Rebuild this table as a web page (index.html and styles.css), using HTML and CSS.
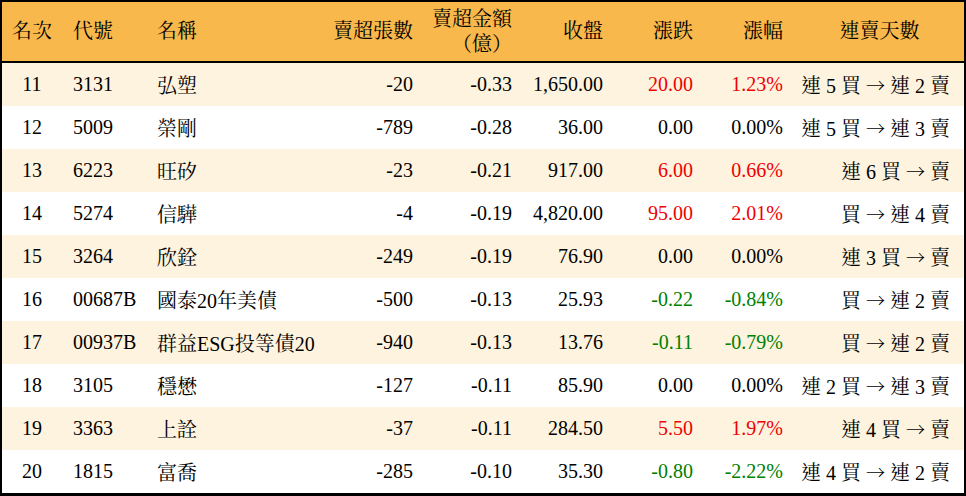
FILE: index.html
```html
<!DOCTYPE html>
<html lang="zh-Hant">
<head>
<meta charset="utf-8">
<link rel="stylesheet" href="styles.css">
</head>
<body>
<div class="board">
  <div class="row head">
    <div class="c center">名次</div>
    <div class="c left code">代號</div>
    <div class="c left name">名稱</div>
    <div class="c right">賣超張數</div>
    <div class="c right two">賣超金額<br>（億）</div>
    <div class="c right">收盤</div>
    <div class="c right">漲跌</div>
    <div class="c right">漲幅</div>
    <div class="c center last">連賣天數</div>
  </div>
  <div class="row odd">
    <div class="c center">11</div><div class="c left code">3131</div><div class="c left name">弘塑</div>
    <div class="c right">-20</div><div class="c right">-0.33</div><div class="c right">1,650.00</div>
    <div class="c right up">20.00</div><div class="c right up">1.23%</div><div class="c right last">連 5 買 <span class="arrow">→</span> 連 2 賣</div>
  </div>
  <div class="row">
    <div class="c center">12</div><div class="c left code">5009</div><div class="c left name">榮剛</div>
    <div class="c right">-789</div><div class="c right">-0.28</div><div class="c right">36.00</div>
    <div class="c right">0.00</div><div class="c right">0.00%</div><div class="c right last">連 5 買 <span class="arrow">→</span> 連 3 賣</div>
  </div>
  <div class="row odd">
    <div class="c center">13</div><div class="c left code">6223</div><div class="c left name">旺矽</div>
    <div class="c right">-23</div><div class="c right">-0.21</div><div class="c right">917.00</div>
    <div class="c right up">6.00</div><div class="c right up">0.66%</div><div class="c right last">連 6 買 <span class="arrow">→</span> 賣</div>
  </div>
  <div class="row">
    <div class="c center">14</div><div class="c left code">5274</div><div class="c left name">信驊</div>
    <div class="c right">-4</div><div class="c right">-0.19</div><div class="c right">4,820.00</div>
    <div class="c right up">95.00</div><div class="c right up">2.01%</div><div class="c right last">買 <span class="arrow">→</span> 連 4 賣</div>
  </div>
  <div class="row odd">
    <div class="c center">15</div><div class="c left code">3264</div><div class="c left name">欣銓</div>
    <div class="c right">-249</div><div class="c right">-0.19</div><div class="c right">76.90</div>
    <div class="c right">0.00</div><div class="c right">0.00%</div><div class="c right last">連 3 買 <span class="arrow">→</span> 賣</div>
  </div>
  <div class="row">
    <div class="c center">16</div><div class="c left code">00687B</div><div class="c left name">國泰20年美債</div>
    <div class="c right">-500</div><div class="c right">-0.13</div><div class="c right">25.93</div>
    <div class="c right down">-0.22</div><div class="c right down">-0.84%</div><div class="c right last">買 <span class="arrow">→</span> 連 2 賣</div>
  </div>
  <div class="row odd">
    <div class="c center">17</div><div class="c left code">00937B</div><div class="c left name">群益ESG投等債20</div>
    <div class="c right">-940</div><div class="c right">-0.13</div><div class="c right">13.76</div>
    <div class="c right down">-0.11</div><div class="c right down">-0.79%</div><div class="c right last">買 <span class="arrow">→</span> 連 2 賣</div>
  </div>
  <div class="row">
    <div class="c center">18</div><div class="c left code">3105</div><div class="c left name">穩懋</div>
    <div class="c right">-127</div><div class="c right">-0.11</div><div class="c right">85.90</div>
    <div class="c right">0.00</div><div class="c right">0.00%</div><div class="c right last">連 2 買 <span class="arrow">→</span> 連 3 賣</div>
  </div>
  <div class="row odd">
    <div class="c center">19</div><div class="c left code">3363</div><div class="c left name">上詮</div>
    <div class="c right">-37</div><div class="c right">-0.11</div><div class="c right">284.50</div>
    <div class="c right up">5.50</div><div class="c right up">1.97%</div><div class="c right last">連 4 買 <span class="arrow">→</span> 賣</div>
  </div>
  <div class="row">
    <div class="c center">20</div><div class="c left code">1815</div><div class="c left name">富喬</div>
    <div class="c right">-285</div><div class="c right">-0.10</div><div class="c right">35.30</div>
    <div class="c right down">-0.80</div><div class="c right down">-2.22%</div><div class="c right last">連 4 買 <span class="arrow">→</span> 連 2 賣</div>
  </div>
</div>
</body>
</html>
```

FILE: styles.css
```css
html, body {
  margin: 0;
  padding: 0;
  background: #ffffff;
}

.board {
  width: 966px;
  height: 496px;
  box-sizing: border-box;
  border: 2px solid #000;
  border-bottom-width: 3px;
  font-family: "Liberation Serif", "Noto Serif CJK TC", "Noto Sans CJK TC", serif;
  font-size: 20px;
  color: #000;
  overflow: hidden;
}

.row {
  display: grid;
  grid-template-columns: 60px 83px 155px 125px 99px 91px 90px 90px 169px;
  height: 43px;
  align-items: center;
  background: #ffffff;
}

.row.odd {
  background: #fef3de;
}

.row.head {
  height: 59px;
  background: #f9b84b;
  border-bottom: 2px solid #000;
  line-height: 25px;
}

.c {
  white-space: nowrap;
}

.center {
  text-align: center;
}

.left {
  text-align: left;
}

.right {
  text-align: right;
  padding-right: 12px;
}

.code {
  padding-left: 11px;
}

.name {
  padding-left: 12px;
}

.last.right {
  padding-right: 14px;
}

.two {
  padding-top: 1px;
}

.arrow {
  font-family: "Noto Serif CJK TC", "Noto Sans CJK TC", sans-serif;
  font-size: 19px;
}

.up {
  color: #f00000;
}

.down {
  color: #008000;
}
```
